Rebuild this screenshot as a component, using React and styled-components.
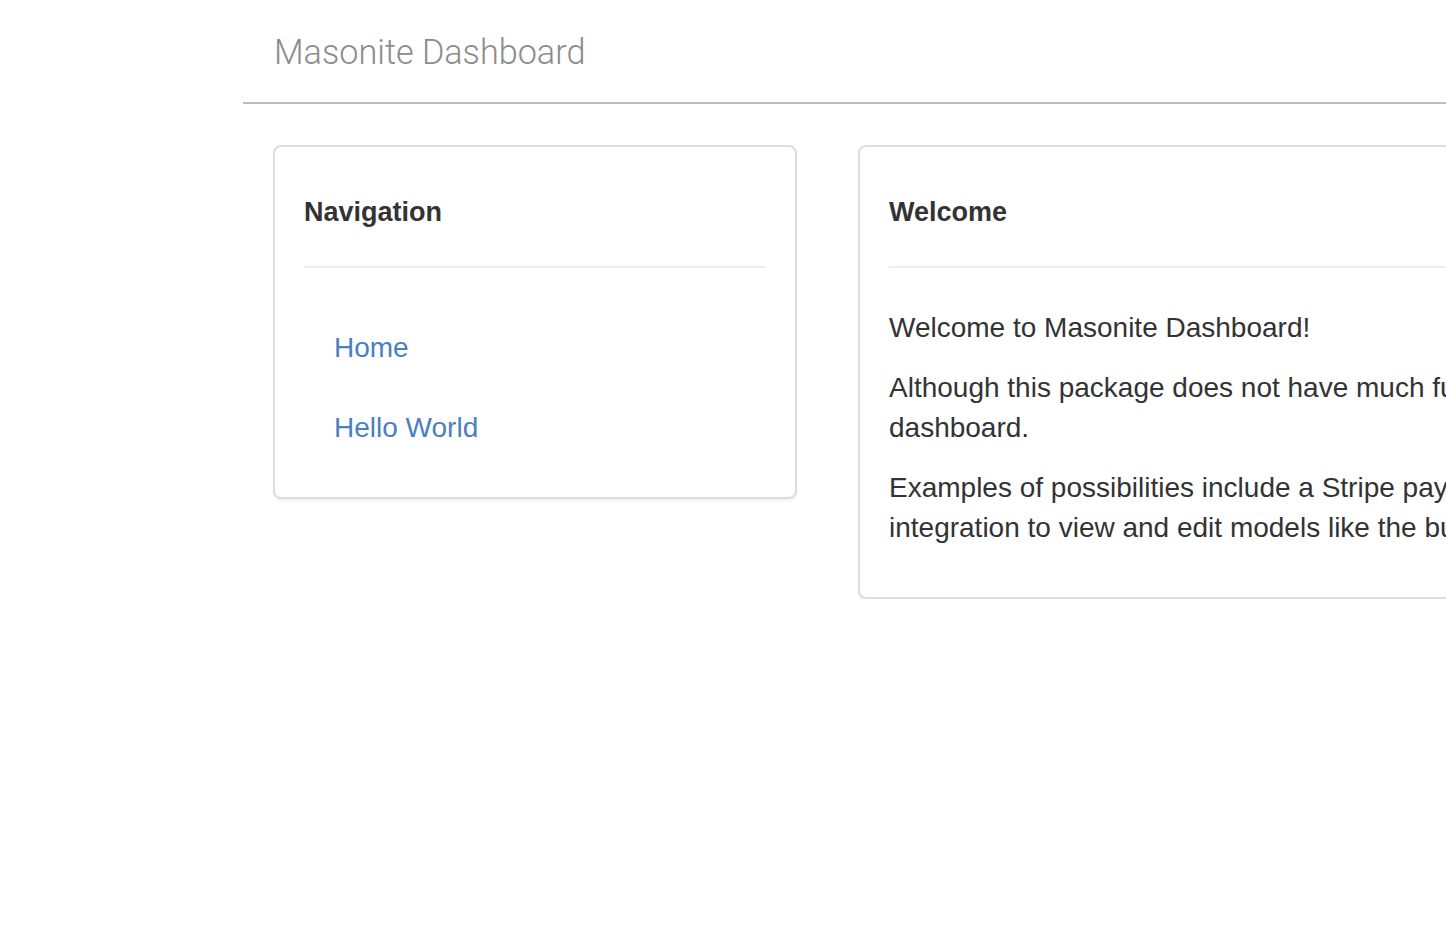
import React from "react";
import styled, { createGlobalStyle } from "styled-components";

const GlobalStyle = createGlobalStyle`
  html, body {
    margin: 0;
    padding: 0;
    background: #ffffff;
    overflow: hidden;
  }
  body {
    font-family: "Liberation Sans", Arial, sans-serif;
    color: #333333;
  }
  * { box-sizing: border-box; }
`;

const Main = styled.div`
  margin-left: 243px;
  width: 2000px;
`;

const Header = styled.header`
  height: 104px;
  display: flex;
  align-items: center;
  padding: 0 30px;
  border-bottom: 2px solid #bcbcbc;
`;

const Brand = styled.div`
  font-family: Roboto, "Liberation Sans", sans-serif;
  font-weight: 300;
  font-size: 34.2px;
  line-height: 40px;
  color: #8c8c8c;
  margin-left: 1px;
  margin-top: 2px;
`;

const Content = styled.div`
  display: flex;
  align-items: flex-start;
  gap: 61px;
  padding: 41px 30px 0;
`;

const Card = styled.section`
  width: ${(p) => p.$width}px;
  flex: none;
  background: #fff;
  border: 2px solid #dddddd;
  border-radius: 8px;
  box-shadow: 0 2px 2px rgba(0, 0, 0, 0.05);
  padding: 0 29px;
`;

const CardTitle = styled.h4`
  margin: 0;
  padding: 45px 0 34px;
  font-size: 27px;
  line-height: 40px;
  font-weight: 700;
  color: #333;
  border-bottom: 2px solid #eeeeee;
`;

const CardBody = styled.div`
  padding: 40px 0 29px;
`;

const NavList = styled.ul`
  list-style: none;
  margin: 0;
  padding: 0;
`;

const NavLink = styled.a`
  display: block;
  padding: 20px 30px;
  font-size: 28px;
  line-height: 40px;
  color: #4a80c0;
  text-decoration: none;
`;

const Para = styled.p`
  margin: 0 0 20px;
  font-size: 28px;
  line-height: 40px;
  color: #333;
  max-width: 1190px;
`;

export default function App() {
  return (
    <>
      <GlobalStyle />
      <Main>
        <Header>
          <Brand>Masonite Dashboard</Brand>
        </Header>
        <Content>
          <Card $width={524}>
            <CardTitle>Navigation</CardTitle>
            <CardBody>
              <NavList>
                <li><NavLink href="#">Home</NavLink></li>
                <li><NavLink href="#">Hello World</NavLink></li>
              </NavList>
            </CardBody>
          </Card>
          <Card $width={1254}>
            <CardTitle>Welcome</CardTitle>
            <CardBody>
              <Para>Welcome to Masonite Dashboard!</Para>
              <Para>
                Although this package does not have much functionality yet, it is a great starting point for any dashboard.
              </Para>
              <Para>
                Examples of possibilities include a Stripe payment dashboard, a mail viewer, or an ORM integration to view and edit models like the built-in admin.
              </Para>
            </CardBody>
          </Card>
        </Content>
      </Main>
    </>
  );
}
